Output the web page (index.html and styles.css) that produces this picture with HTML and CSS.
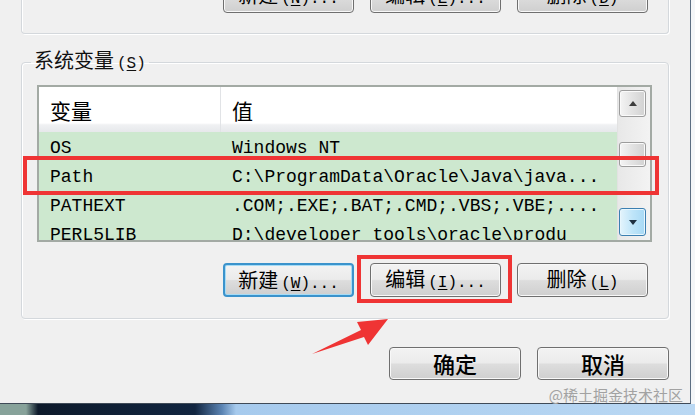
FILE: index.html
```html
<!DOCTYPE html>
<html>
  <head>
    <meta charset="utf-8">
    <title>环境变量</title>
    <link rel="stylesheet" href="styles.css">
  </head>
  <body>
    <div class="screen">
      <div class="dialog">
        <div class="group group-user">
          <button type="button" class="btn">新建<span class="key">(<u>N</u>)...</span></button>
          <button type="button" class="btn">编辑<span class="key">(<u>E</u>)...</span></button>
          <button type="button" class="btn">删除<span class="key">(<u>D</u>)</span></button>
        </div>

        <fieldset class="group group-sys">
          <legend>系统变量<span class="key">(<u>S</u>)</span></legend>
          <div class="listview">
            <div class="list-main">
              <div class="list-head">
                <span>变量</span>
                <span>值</span>
              </div>
              <div class="row"><span>OS</span><span>Windows NT</span></div>
              <div class="row"><span>Path</span><span>C:\ProgramData\Oracle\Java\java...</span></div>
              <div class="row"><span>PATHEXT</span><span>.COM;.EXE;.BAT;.CMD;.VBS;.VBE;....</span></div>
              <div class="row"><span>PERL5LIB</span><span>D:\developer_tools\oracle\produ</span></div>
            </div>
            <div class="scrollbar">
              <div class="sb-btn sb-up"><i></i></div>
              <div class="sb-thumb"></div>
              <div class="sb-btn sb-down"><i></i></div>
            </div>
          </div>
          <div class="btn-row">
            <button type="button" class="btn btn-focus">新建<span class="key">(<u>W</u>)...</span></button>
            <button type="button" class="btn">编辑<span class="key">(<u>I</u>)...</span></button>
            <button type="button" class="btn">删除<span class="key">(<u>L</u>)</span></button>
          </div>
        </fieldset>

        <div class="footer">
          <button type="button" class="btn btn-main">确定</button>
          <button type="button" class="btn btn-main">取消</button>
        </div>
      </div>
      <div class="taskbar"></div>

      <!-- annotations drawn over the screenshot -->
      <div class="mark mark-path"></div>
      <div class="mark mark-edit"></div>
      <svg class="arrow" width="100" height="60" viewBox="0 0 100 60">
        <polygon points="12,49 61,25 57,17 88,14 68,40 64,32" fill="#ef3434"/>
      </svg>
      <div class="watermark">@稀土掘金技术社区</div>
    </div>
  </body>
</html>
```

FILE: styles.css
```css
* {
  box-sizing: border-box;
}
body {
  margin: 0;
  width: 695px;
  height: 415px;
  overflow: hidden;
  background: #f4f6f8;
  font-family: "Noto Sans CJK SC", sans-serif;
}
.screen {
  position: relative;
  height: 415px;
}
.dialog {
  width: 691px;
  height: 404px;
  background: #f0f0f0;
  border-right: 1px solid #5c6e82;
  border-bottom: 1px solid #3f4a57;
  overflow: hidden;
}

/* group boxes */
.group {
  border: 1px solid #d4d8dc;
  box-shadow: inset 1px 1px 0 #fff, 1px 1px 0 #fff;
  border-radius: 4px;
}
.group-user {
  margin: -60px 21px 0;
  height: 94px;
  border-top: 0;
  border-radius: 0 0 4px 4px;
  display: flex;
  align-items: flex-end;
  justify-content: flex-end;
  gap: 16px;
  padding: 0 20px 20px 0;
}
.group-sys {
  margin: 14px 21px 0;
  padding: 9px 16px 21px 15px;
  min-width: 0;
}
.group-sys legend {
  font-size: 20px;
  line-height: 24px;
  padding: 0 3px;
  margin-left: -6px;
  color: #111;
}

/* buttons */
.btn {
  width: 131px;
  height: 34px;
  padding: 0;
  border: 1px solid #6f6f6f;
  border-radius: 4px;
  box-shadow: inset 0 0 0 1px #f8f8f8;
  background: linear-gradient(#f3f3f3 0%, #ebebeb 48%, #dddddd 52%, #cfcfcf 100%);
  font-family: "Noto Sans CJK SC", sans-serif;
  font-size: 20px;
  line-height: 30px;
  color: #000;
  white-space: nowrap;
}
.btn-focus {
  border: 2px solid #3b93cc;
  box-shadow: inset 0 0 0 1px #a6dcf6;
}
.btn-main {
  width: 132px;
  height: 33px;
  font-size: 22px;
  line-height: 29px;
  font-weight: 500;
}
.key {
  font-family: "Liberation Mono", monospace;
  font-size: 16px;
  margin-left: 3px;
}
.key u {
  text-underline-offset: 2px;
}
.btn-row {
  display: flex;
  justify-content: flex-end;
  gap: 16px;
  margin-top: 21px;
  padding-right: 4px;
}
.footer {
  display: flex;
  justify-content: flex-end;
  gap: 16px;
  padding-right: 21px;
  margin-top: 28px;
}

/* list view */
.listview {
  height: 157px;
  border: 2px solid #a3aaa4;
  display: flex;
  overflow: hidden;
}
.list-main {
  flex: 1;
  background: #cde8cf;
  overflow: hidden;
}
.list-head {
  display: grid;
  grid-template-columns: 181px 1fr;
  height: 45px;
  background: linear-gradient(#fff 0%, #fff 80%, #f0f1f3 84%, #e6e8eb 100%);
  font-size: 21px;
}
.list-head span {
  padding: 5px 0 0 11px;
  line-height: 36px;
}
.list-head span + span {
  border-left: 1px solid #e1e3e6;
  padding-left: 11px;
}
.row {
  display: grid;
  grid-template-columns: 181px 1fr;
  height: 29px;
  align-items: center;
  padding-top: 2px;
  font-family: "Liberation Mono", monospace;
  font-size: 18px;
  white-space: nowrap;
  color: #000;
}
.row span {
  padding-left: 11px;
  overflow: hidden;
}
.row span + span {
  padding-left: 12px;
}

/* scrollbar */
.scrollbar {
  width: 33px;
  border-left: 1px solid #e2e2e2;
  background: linear-gradient(to right, #e8e8e8, #f3f3f3);
  display: flex;
  flex-direction: column;
  padding: 3px 0 4px 1px;
}
.sb-btn {
  width: 27px;
  height: 27px;
  border: 1px solid #9c9c9c;
  border-radius: 3px;
  box-shadow: inset 0 0 0 1px #fafafa;
  background: linear-gradient(to right, #f4f4f4, #e2e2e2 50%, #d2d2d2);
  display: flex;
  align-items: center;
  justify-content: center;
}
.sb-up i {
  border-left: 4px solid transparent;
  border-right: 4px solid transparent;
  border-bottom: 5px solid #3d3d3d;
}
.sb-thumb {
  width: 27px;
  height: 25px;
  margin-top: 25px;
  border: 1px solid #9c9c9c;
  border-radius: 3px;
  box-shadow: inset 0 0 0 1px #fafafa;
  background: linear-gradient(to right, #f4f4f4, #e2e2e2 50%, #d2d2d2);
}
.sb-down {
  margin-top: auto;
  height: 28px;
  border-color: #3c7fb1;
  box-shadow: inset 0 0 0 1px #e8f6fd;
  background: linear-gradient(to right, #e4f4fc, #bfe5f9 50%, #a7d9f5);
}
.sb-down i {
  border-left: 4px solid transparent;
  border-right: 4px solid transparent;
  border-top: 5px solid #1e2f40;
}

/* taskbar strip under the dialog */
.taskbar {
  height: 11px;
  background: linear-gradient(to right, #87a29a 0, #87a29a 26px, #0d1a2b 38px, #112540 195px, #5b84b3 222px, #a6caed 236px, #bad8f3 100%);
}

/* annotations */
.mark {
  position: absolute;
  border: 4px solid #ef3434;
}
.mark-path {
  left: 23px;
  top: 156px;
  width: 636px;
  height: 39px;
}
.mark-edit {
  left: 357px;
  top: 255px;
  width: 155px;
  height: 48px;
}
.arrow {
  position: absolute;
  left: 300px;
  top: 305px;
}
.watermark {
  position: absolute;
  right: 12px;
  top: 384px;
  font-size: 15px;
  color: #a2a2a2;
}
```
